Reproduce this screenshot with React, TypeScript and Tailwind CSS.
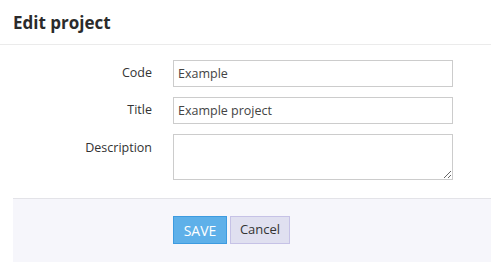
export default function App() {
  const font = { fontFamily: '"Open Sans", "Noto Sans", sans-serif' };
  return (
    <div className="h-[262px] w-[491px] overflow-hidden bg-white text-[#333]" style={font}>
      <div className="flex h-[45px] items-center border-b border-[#ebebeb] pl-[13px]">
        <h1 className="text-[17px] font-bold leading-none text-[#2b2b2b]">Edit project</h1>
      </div>
      <form className="grid grid-cols-[152px_280px] items-start gap-x-[21px] gap-y-[10px] pt-[15px]">
        <label className="flex h-[27px] items-center justify-end text-[12.5px]">Code</label>
        <input
          defaultValue="Example"
          className="h-[27px] border border-[#cccccc] px-[4px] text-[12.5px] text-[#444] outline-none"
        />
        <label className="flex h-[27px] items-center justify-end text-[12.5px]">Title</label>
        <input
          defaultValue="Example project"
          className="h-[27px] border border-[#cccccc] px-[4px] text-[12.5px] text-[#444] outline-none"
        />
        <label className="flex justify-end pt-[5px] text-[12.5px]">Description</label>
        <textarea className="block h-[46px] resize-y border border-[#cccccc] px-[4px] text-[12.5px] outline-none" />
      </form>
      <div className="ml-[13px] mt-[18px] h-[70px] border-t border-[#e3e3e8] bg-[#f6f6fb] pl-[160px] pt-[17px]">
        <div className="flex gap-[3px]">
          <button className="h-[28px] w-[54px] border border-[#3d9be0] bg-[#5eb0e9] text-[14px] text-white">
            SAVE
          </button>
          <button className="h-[28px] w-[60px] border border-[#c6c2e6] bg-[#e0e0f0] text-[13px] text-[#333]">
            Cancel
          </button>
        </div>
      </div>
    </div>
  );
}
